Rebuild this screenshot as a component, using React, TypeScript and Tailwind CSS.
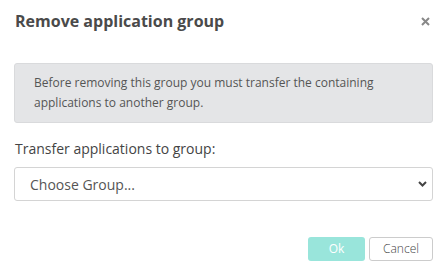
export default function App() {
  return (
    <div className="w-[442px] h-[272px] bg-white overflow-hidden" style={{ fontFamily: '"Open Sans", "Liberation Sans", sans-serif' }}>
      {/* Header */}
      <div className="flex items-center justify-between pl-[15px] pr-[12px] pt-[11px] h-[40px]">
        <h3 className="text-[16px] leading-[22px] font-bold text-[#4a4a4a] -mt-[10px]">Remove application group</h3>
        <button className="text-[#888] -mt-[8px]">
          <svg width="9" height="9" viewBox="0 0 9 9">
            <path d="M1 1L8 8M8 1L1 8" stroke="currentColor" strokeWidth="2" />
          </svg>
        </button>
      </div>

      {/* Body */}
      <div className="pl-[14px] pr-[9px] pt-[23px]">
        <div className="bg-[#e4e5e7] border border-[#d9dadc] rounded-[3px] pl-[19px] pr-4 py-[9px]">
          <p className="text-[12px] leading-[20px] text-[#555]">
            Before removing this group you must transfer the containing applications to another group.
          </p>
        </div>

        <label className="block mt-[16px] ml-[1px] text-[14px] leading-[20px] text-[#444]">Transfer applications to group:</label>
        <div className="relative mt-[8px]">
          <select className="appearance-none w-full h-[34px] border border-[#d4d4d4] rounded-[3px] bg-white pl-[15px] text-[14px] text-[#555] outline-none">
            <option>Choose Group...</option>
          </select>
          <svg className="absolute right-[6px] top-[14px] pointer-events-none" width="9" height="6" viewBox="0 0 9 6">
            <path d="M1 1L4.5 4.5L8 1" stroke="#444" strokeWidth="2" fill="none" />
          </svg>
        </div>
      </div>

      {/* Footer */}
      <div className="flex justify-end gap-[4px] pr-[9px] mt-[36px]">
        <button className="w-[57px] h-[24px] rounded-[3px] bg-[#99e5db] text-white text-[12px]">Ok</button>
        <button className="w-[64px] h-[24px] rounded-[3px] bg-white border border-[#ccc] text-[#444] text-[12px] font-light">Cancel</button>
      </div>
    </div>
  );
}
